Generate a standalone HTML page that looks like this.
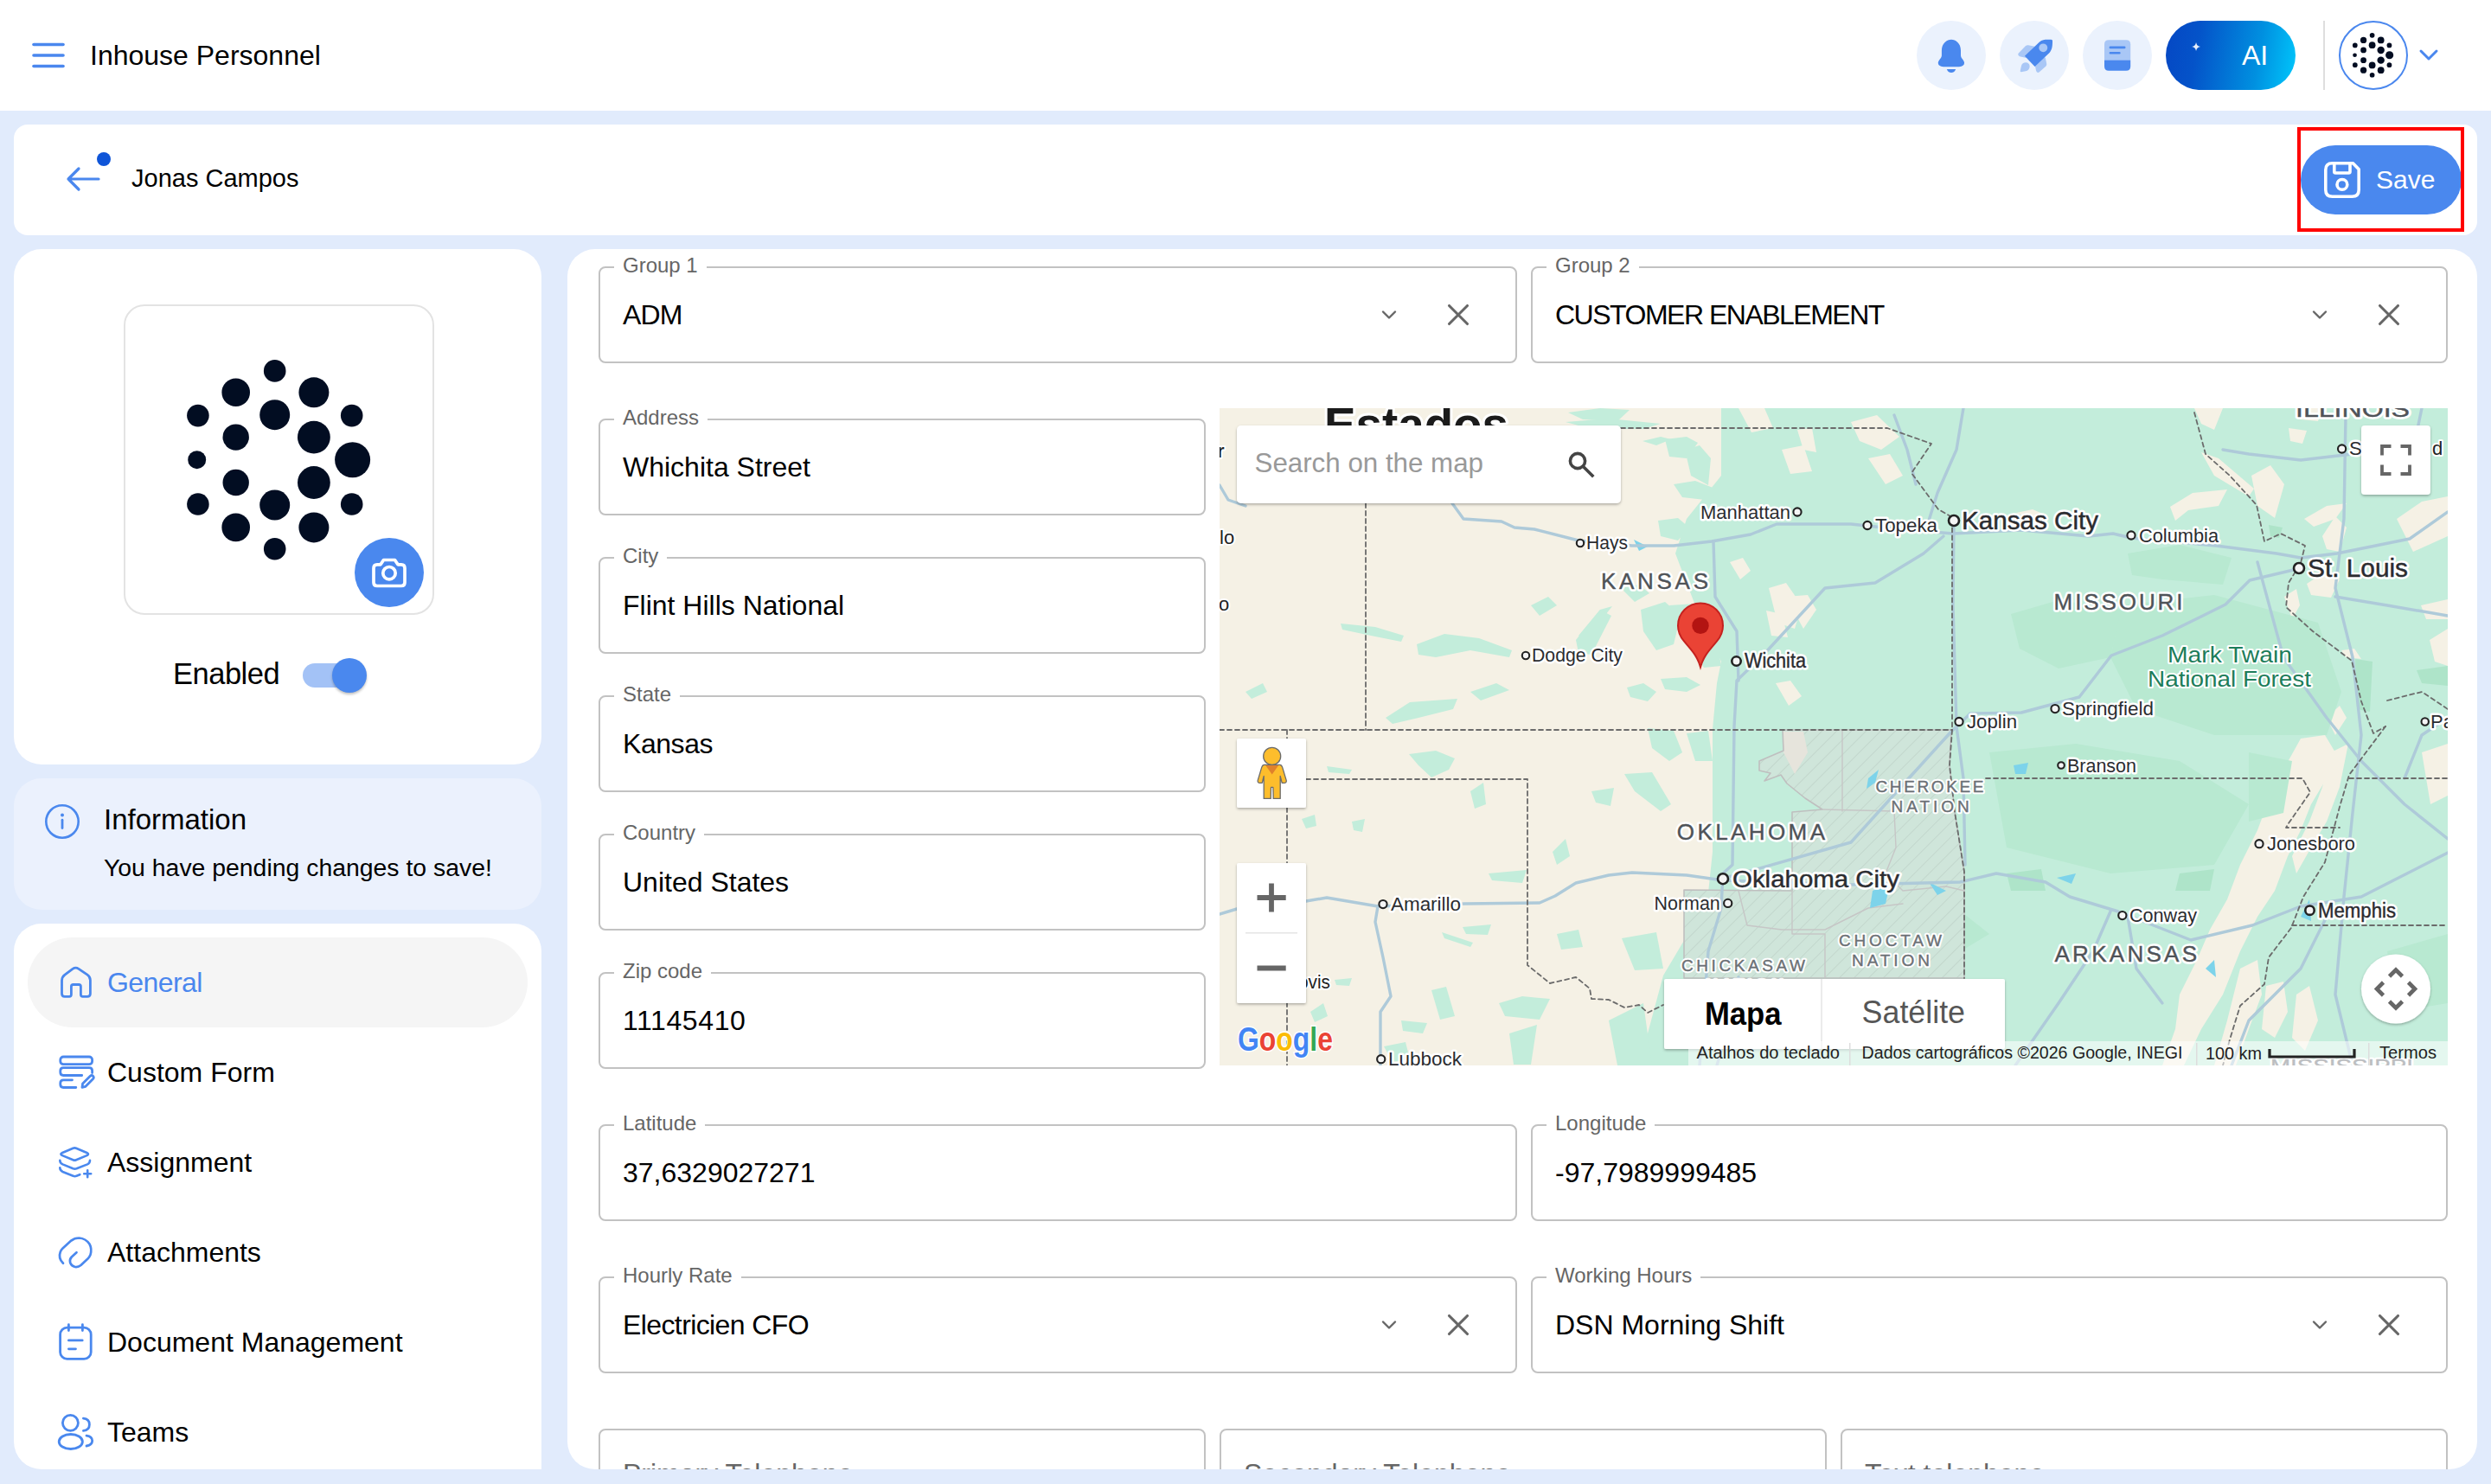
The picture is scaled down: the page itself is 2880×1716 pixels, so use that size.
<!DOCTYPE html>
<html><head><meta charset="utf-8">
<style>
*{box-sizing:border-box;margin:0;padding:0}
html,body{width:2880px;height:1716px;overflow:hidden}
body{background:#e1ebfc;font-family:"Liberation Sans",sans-serif;color:#000;position:relative}
.abs{position:absolute}
.hdr{left:0;top:0;width:2880px;height:128px;background:#fff}
.card{background:#fff;border-radius:32px}
.fld{position:absolute;border:2px solid #c2c2c2;border-radius:8px;height:112px}
.fld .lbl{position:absolute;top:-19px;left:16px;padding:0 10px;background:#fff;font-size:24px;color:#666;line-height:32px;white-space:nowrap}
.fld .val{position:absolute;left:26px;top:0;line-height:108px;font-size:32px;color:#000;white-space:nowrap}
.fld .chev{position:absolute;top:44px;width:22px;height:22px}
.fld .clr{position:absolute;top:40px;width:28px;height:28px}
.fld .ph{position:absolute;left:26px;top:30px;font-size:32px;line-height:40px;color:#666;white-space:nowrap}
.nav{position:absolute;left:68px;font-size:32px;white-space:nowrap}
.navt{position:absolute;left:124px;font-size:32px;white-space:nowrap;line-height:40px}
</style></head>
<body>
<svg width="0" height="0" style="position:absolute"><defs>
<g id="dots" fill="#020d22"><circle cx="-4.9" cy="-102.9" r="12.8"/><circle cx="-49.9" cy="-78.0" r="16.3"/><circle cx="40.3" cy="-78.0" r="17.5"/><circle cx="-93.7" cy="-51.2" r="12.8"/><circle cx="-4.9" cy="-52.1" r="17.5"/><circle cx="84.1" cy="-51.2" r="12.8"/><circle cx="-49.9" cy="-26.2" r="15.2"/><circle cx="40.3" cy="-26.2" r="18.9"/><circle cx="-94.9" cy="-0.1" r="10.5"/><circle cx="85.0" cy="-0.1" r="20.5"/><circle cx="-49.9" cy="26.2" r="15.2"/><circle cx="40.3" cy="26.2" r="18.9"/><circle cx="-93.7" cy="51.2" r="12.8"/><circle cx="-4.9" cy="52.2" r="17.5"/><circle cx="84.1" cy="51.2" r="12.8"/><circle cx="-49.9" cy="78.1" r="16.3"/><circle cx="40.3" cy="78.1" r="17.5"/><circle cx="-4.9" cy="103.0" r="12.8"/></g>
<g id="chev"><path d="M-7 -3.5 L0 3.5 L7 -3.5" fill="none" stroke="#666" stroke-width="2.4" stroke-linecap="round" stroke-linejoin="round"/></g>
<g id="xx"><path d="M-10.5 -10.5 L10.5 10.5 M10.5 -10.5 L-10.5 10.5" fill="none" stroke="#666" stroke-width="3.1" stroke-linecap="round"/></g>
</defs></svg>
<!-- header -->
<div class="abs hdr"></div>
<svg class="abs" style="left:36px;top:46px" width="40" height="34" viewBox="0 0 40 34">
 <g stroke="#4a87ee" stroke-width="3.6" stroke-linecap="round"><line x1="3" y1="5.5" x2="37" y2="5.5"/><line x1="3" y1="18" x2="37" y2="18"/><line x1="3" y1="30.5" x2="37" y2="30.5"/></g>
</svg>
<div class="abs" style="left:104px;top:44px;font-size:32px;line-height:40px;white-space:nowrap">Inhouse Personnel</div>

<!-- header right icons -->
<div class="abs" style="left:2216px;top:24px;width:80px;height:80px;border-radius:50%;background:#ebf2fd"></div>
<div class="abs" style="left:2312px;top:24px;width:80px;height:80px;border-radius:50%;background:#ebf2fd"></div>
<div class="abs" style="left:2408px;top:24px;width:80px;height:80px;border-radius:50%;background:#ebf2fd"></div>
<div class="abs" style="left:2504px;top:24px;width:150px;height:80px;border-radius:40px;background:linear-gradient(100deg,#0547c4 0%,#0453c9 25%,#0090e0 70%,#00c8fc 100%)"></div>
<div class="abs" style="left:2592px;top:44px;font-size:32px;line-height:40px;color:#fff">AI</div>
<div class="abs" style="left:2686px;top:24px;width:2px;height:80px;background:#dedede"></div>
<div class="abs" style="left:2704px;top:24px;width:80px;height:80px;border-radius:50%;border:2px solid #4a87ee;background:#fff"></div>
<svg class="abs" style="left:2216px;top:24px" width="80" height="80" viewBox="0 0 80 80">
 <path d="M40 21.8 C35 21.8 29 26 28.9 34.4 L28.9 40.2 C28.9 43 24.8 46 24.8 48.6 C24.8 51.5 27 53 31 53.2 L49 53.2 C53 53 55.1 51.5 55.1 48.6 C55.1 46 51 43 51 40.2 L51 34.4 C51 26 45 21.8 40 21.8 Z" fill="#4a88ee"/>
 <path d="M34.8 56 L45.2 56 C44 59 42 60 40 60 C38 60 36 59 34.8 56 Z" fill="#4a88ee"/>
</svg>
<svg class="abs" style="left:2312px;top:24px" width="80" height="80" viewBox="0 0 80 80">
 <path d="M22 37.3 L30 29 C31 28.2 32 28 33 28.2 L40.5 29.8 L31 43 L24 41.5 C21.5 41 20.5 38.8 22 37.3 Z" fill="#a9c7f6"/>
 <path d="M41.2 42.6 L52.8 42.6 L54.2 49.8 C54.4 51 54 52 53.2 52.8 L45.5 59.5 C44 60.5 42.5 59.5 42 57.5 L40 48 Z" fill="#a9c7f6"/>
 <path d="M24.8 59.2 C23.8 59.2 23.6 58.5 23.8 57.5 L25 52 C25.5 49.5 28 48 30.5 48.2 C33.5 48.5 35 51 34.6 53.5 C34.2 56 32.5 57.8 30 58.3 Z" fill="#a9c7f6"/>
 <path d="M28.9 40.8 L46 24.5 C50 21 55 21.8 59.5 21.8 C60.5 21.9 61 22.5 61 23.5 C61 28 61 33 57.5 37 L40.6 53 Z" fill="#4a88ee"/>
 <circle cx="50.3" cy="31.3" r="4.9" fill="#a9c7f6"/>
</svg>
<svg class="abs" style="left:2408px;top:24px" width="80" height="80" viewBox="0 0 80 80">
 <path d="M30 22.2 H50.2 Q55.2 22.2 55.2 27.2 V45.5 H25 V27.2 Q25 22.2 30 22.2 Z" fill="#a9c7f6"/>
 <path d="M25 45.5 H55.2 V52.7 Q55.2 57.7 50.2 57.7 H30 Q25 57.7 25 52.7 Z" fill="#4a88ee"/>
 <path d="M31.9 30.9 H48.2 M31.9 37.3 H42.4" stroke="#4a88ee" stroke-width="2.6" stroke-linecap="round"/>
</svg>
<svg class="abs" style="left:2530px;top:45px" width="18" height="18" viewBox="0 0 18 18"><path d="M9 4 Q9.6 8.4 14 9 Q9.6 9.6 9 14 Q8.4 9.6 4 9 Q8.4 8.4 9 4Z" fill="#fff" opacity=".9"/></svg>
<svg class="abs" style="left:2704px;top:24px" width="80" height="80" viewBox="0 0 80 80"><g transform="translate(39.7 39.8) scale(0.223)"><use href="#dots"/></g></svg>
<svg class="abs" style="left:2796px;top:56px" width="24" height="16" viewBox="0 0 24 16"><path d="M3 3 L12 12 L21 3" fill="none" stroke="#4a87ee" stroke-width="3" stroke-linecap="round" stroke-linejoin="round"/></svg>

<!-- title card -->
<div class="abs card" style="left:16px;top:144px;width:2848px;height:128px;border-radius:16px"></div>
<svg class="abs" style="left:74px;top:190px" width="46" height="36" viewBox="0 0 46 36">
 <path d="M40 17 H5 M17 5 L5 17 L17 29" fill="none" stroke="#4a87ee" stroke-width="3.2" stroke-linecap="round" stroke-linejoin="round"/>
</svg>
<div class="abs" style="left:112px;top:176px;width:16px;height:16px;border-radius:50%;background:#0f55d8"></div>
<div class="abs" style="left:152px;top:188px;font-size:29px;line-height:36px;white-space:nowrap">Jonas Campos</div>
<div class="abs" style="left:2660px;top:168px;width:186px;height:80px;border-radius:40px;background:#4a88ee"></div>
<svg class="abs" style="left:2680px;top:180px" width="56" height="56" viewBox="0 0 56 56">
 <path d="M16.5 8.8 H40.4 L47.2 15.8 V39.5 Q47.2 47.2 39.5 47.2 H16.5 Q8.8 47.2 8.8 39.5 V16.5 Q8.8 8.8 16.5 8.8 Z" fill="none" stroke="#fff" stroke-width="3.6" stroke-linejoin="round"/>
 <path d="M18.8 9 V18.5 Q18.8 20 20.3 20 H35.5 Q37 20 37 18.5 V9" fill="none" stroke="#fff" stroke-width="3.6"/>
 <circle cx="27.9" cy="33.4" r="5.9" fill="none" stroke="#fff" stroke-width="3.6"/>
</svg>
<div class="abs" style="left:2747px;top:188px;font-size:30px;line-height:40px;color:#fff">Save</div>
<div class="abs" style="left:2656px;top:147px;width:193px;height:121px;border:4px solid #ff0000"></div>

<!-- avatar card -->
<div class="abs card" style="left:16px;top:288px;width:610px;height:596px"></div>
<div class="abs" style="left:143px;top:352px;width:359px;height:359px;border:2px solid #e3e3e3;border-radius:24px"></div>
<svg class="abs" style="left:143px;top:352px" width="359" height="359" viewBox="143 352 359 359"><g transform="translate(322.6 531.8)"><use href="#dots"/></g></svg>
<div class="abs" style="left:410px;top:622px;width:80px;height:80px;border-radius:50%;background:#4a88ee"></div>
<svg class="abs" style="left:400px;top:612px" width="100" height="100" viewBox="0 0 100 100">
 <path d="M36 40.8 H40 L43.5 35.5 H56.5 L60 40.8 H64 Q68 40.8 68 45 V61.5 Q68 65.5 64 65.5 H36 Q32 65.5 32 61.5 V45 Q32 40.8 36 40.8 Z" fill="none" stroke="#fff" stroke-width="3.7" stroke-linejoin="round"/>
 <circle cx="50" cy="50.7" r="7.2" fill="none" stroke="#fff" stroke-width="3.7"/>
</svg>
<div class="abs" style="left:200px;top:759px;font-size:34.5px;line-height:40px;letter-spacing:-0.5px">Enabled</div>
<div class="abs" style="left:350px;top:767px;width:70px;height:28px;border-radius:14px;background:#a3c2f6"></div>
<div class="abs" style="left:384px;top:761px;width:40px;height:40px;border-radius:50%;background:#4a88ee;box-shadow:0 2px 3px rgba(0,0,0,.25)"></div>

<!-- info box -->
<div class="abs" style="left:16px;top:900px;width:610px;height:152px;border-radius:32px;background:#ebf1fd"></div>
<svg class="abs" style="left:40px;top:920px" width="60" height="60" viewBox="0 0 60 60">
 <circle cx="32" cy="30" r="18.7" fill="none" stroke="#4a88ee" stroke-width="2.6"/>
 <circle cx="32" cy="22.6" r="2" fill="#4a88ee"/>
 <path d="M32 28.2 V37.6" stroke="#4a88ee" stroke-width="2.8" stroke-linecap="round"/>
</svg>
<div class="abs" style="left:120px;top:930px;font-size:33px;line-height:36px">Information</div>
<div class="abs" style="left:120px;top:986px;font-size:28.4px;line-height:34px;white-space:nowrap">You have pending changes to save!</div>

<!-- nav card -->
<div class="abs" style="left:16px;top:1068px;width:610px;height:631px;border-radius:32px 32px 0 32px;background:#fff"></div>
<div class="abs" style="left:32px;top:1084px;width:578px;height:104px;border-radius:52px;background:#f5f5f5"></div>
<svg class="abs" style="left:60px;top:1110px" width="60" height="60" viewBox="0 0 60 60" fill="none" stroke="#4a88ee" stroke-width="2.8" stroke-linejoin="round" stroke-linecap="round">
 <path d="M22.4 40 V30.8 Q22.4 28.5 24.7 28.5 H31.1 Q33.4 28.5 33.4 30.8 V40 Q33.4 42.3 35.7 42.3 H41 Q44.4 42.3 44.4 39 V23.5 Q44.4 19.5 41 17.2 L31 10.3 Q27.5 8 24 10.3 L15 17.2 Q11.5 19.8 11.5 23.8 V39 Q11.5 42.3 14.8 42.3 H20.1 Q22.4 42.3 22.4 40 Z"/>
</svg>
<svg class="abs" style="left:60px;top:1200px" width="60" height="64" viewBox="0 0 60 64" fill="none" stroke="#4a88ee" stroke-width="2.8" stroke-linejoin="round" stroke-linecap="round">
 <rect x="9.8" y="22" width="36.8" height="8.7" rx="3.5"/>
 <path d="M34.7 43.5 H13.3 Q9.8 43.5 9.8 40 V38 Q9.8 34.6 13.3 34.6 H43.1 Q46.6 34.6 46.6 38 V40.5"/>
 <path d="M27.8 57.5 H13.3 Q9.8 57.5 9.8 54 V52.3 Q9.8 48.8 13.3 48.8 H23.5"/>
 <path d="M35 57.3 L35.6 53 L44.3 44.3 Q46 42.8 47.6 44.3 Q49 46 47.6 47.5 L39 56.3 Z"/>
</svg>
<svg class="abs" style="left:60px;top:1320px" width="60" height="60" viewBox="0 0 60 60" fill="none" stroke="#4a88ee" stroke-width="2.6" stroke-linejoin="round" stroke-linecap="round">
 <path d="M24.5 7.8 Q26.3 7 28.1 7.8 L41 13.3 Q43 14.6 41 15.9 L28.1 21.2 Q26.3 22 24.5 21.2 L11.5 15.9 Q9.3 14.6 11.5 13.3 Z"/>
 <path d="M9.3 21.8 Q9.3 25 12.5 26.4 L24.5 31.3 Q26.5 32 28.5 31.3 L41 26.4 Q44 25 44 21.8"/>
 <path d="M9.3 30.3 Q9.3 33.6 12.5 35 L24.5 39.8 Q26.5 40.6 28.5 39.8 L32.3 38.2"/>
 <path d="M41.2 33.2 V41.2 M37.2 37.2 H45.2"/>
</svg>
<svg class="abs" style="left:60px;top:1420px" width="60" height="60" viewBox="0 0 60 60" fill="none" stroke="#4a88ee" stroke-width="2.7" stroke-linejoin="round" stroke-linecap="round">
 <path d="M13 40.8 Q7 35 9.8 27.5 Q10.8 25.2 12.5 23.6 L22.3 14.6 Q26 11.5 31.5 11.5 Q39 12 43.5 18.5 Q46.5 24 44.5 31 Q43.5 33.5 41.5 35.5 L33.5 43 Q30.5 45.5 26.8 45 Q22.8 44.3 21.2 40.3 Q20 36.5 22.8 33.5 L28.5 28.2"/>
</svg>
<svg class="abs" style="left:60px;top:1525px" width="60" height="60" viewBox="0 0 60 60" fill="none" stroke="#4a88ee" stroke-width="2.8" stroke-linejoin="round" stroke-linecap="round">
 <rect x="9.6" y="10.2" width="35.6" height="36.2" rx="8"/>
 <path d="M19.4 6.7 V13.5 M35.4 6.7 V13.5 M19.4 24.9 H35.2 M19.4 34.8 H27.5"/>
</svg>
<svg class="abs" style="left:60px;top:1630px" width="60" height="60" viewBox="0 0 60 60" fill="none" stroke="#4a88ee" stroke-width="2.8" stroke-linejoin="round" stroke-linecap="round">
 <circle cx="21.4" cy="15.3" r="9"/>
 <ellipse cx="21.8" cy="37" rx="13.6" ry="8.5"/>
 <path d="M36.4 10.1 Q43.3 10.6 43.4 17.2 Q43.3 23.8 36.4 24.3"/>
 <path d="M40 30.1 Q46.5 31 46.7 36 Q46.5 41 40 42"/>
</svg>
<div class="navt" style="top:1116px;color:#4a87ee;letter-spacing:-0.6px">General</div>
<div class="navt" style="top:1220px">Custom Form</div>
<div class="navt" style="top:1324px">Assignment</div>
<div class="navt" style="top:1428px">Attachments</div>
<div class="navt" style="top:1532px">Document Management</div>
<div class="navt" style="top:1636px">Teams</div>

<!-- main card -->
<div class="abs card" style="left:656px;top:288px;width:2208px;height:1411px"></div>

<div class="fld" style="left:692px;top:308px;width:1062px"><span class="lbl">Group 1</span><svg style="position:absolute;left:897px;top:39px" width="30" height="30" viewBox="-15 -15 30 30"><use href="#chev"/></svg><svg style="position:absolute;left:977px;top:39px" width="30" height="30" viewBox="-15 -15 30 30"><use href="#xx"/></svg><span class="val" style="letter-spacing:-0.9px">ADM</span></div>
<div class="fld" style="left:1770px;top:308px;width:1060px"><span class="lbl">Group 2</span><svg style="position:absolute;left:895px;top:39px" width="30" height="30" viewBox="-15 -15 30 30"><use href="#chev"/></svg><svg style="position:absolute;left:975px;top:39px" width="30" height="30" viewBox="-15 -15 30 30"><use href="#xx"/></svg><span class="val" style="letter-spacing:-1.5px">CUSTOMER ENABLEMENT</span></div>
<div class="fld" style="left:692px;top:484px;width:702px"><span class="lbl">Address</span><span class="val">Whichita Street</span></div>
<div class="fld" style="left:692px;top:644px;width:702px"><span class="lbl">City</span><span class="val">Flint Hills National</span></div>
<div class="fld" style="left:692px;top:804px;width:702px"><span class="lbl">State</span><span class="val" style="letter-spacing:-0.45px">Kansas</span></div>
<div class="fld" style="left:692px;top:964px;width:702px"><span class="lbl">Country</span><span class="val">United States</span></div>
<div class="fld" style="left:692px;top:1124px;width:702px"><span class="lbl">Zip code</span><span class="val" style="letter-spacing:0.6px">11145410</span></div>
<div class="fld" style="left:692px;top:1300px;width:1062px"><span class="lbl">Latitude</span><span class="val">37,6329027271</span></div>
<div class="fld" style="left:1770px;top:1300px;width:1060px"><span class="lbl">Longitude</span><span class="val">-97,7989999485</span></div>
<div class="fld" style="left:692px;top:1476px;width:1062px"><span class="lbl">Hourly Rate</span><svg style="position:absolute;left:897px;top:39px" width="30" height="30" viewBox="-15 -15 30 30"><use href="#chev"/></svg><svg style="position:absolute;left:977px;top:39px" width="30" height="30" viewBox="-15 -15 30 30"><use href="#xx"/></svg><span class="val" style="letter-spacing:-0.6px">Electricien CFO</span></div>
<div class="fld" style="left:1770px;top:1476px;width:1060px"><span class="lbl">Working Hours</span><svg style="position:absolute;left:895px;top:39px" width="30" height="30" viewBox="-15 -15 30 30"><use href="#chev"/></svg><svg style="position:absolute;left:975px;top:39px" width="30" height="30" viewBox="-15 -15 30 30"><use href="#xx"/></svg><span class="val">DSN Morning Shift</span></div>

<!-- map -->
<svg class="abs" style="left:1410px;top:472px;overflow:hidden" width="1420" height="760" viewBox="0 0 1420 760" font-family="Liberation Sans, sans-serif">
<rect x="0" y="0" width="1420" height="760" fill="#f5f1e5"/>
<polygon points="580.0,0.0 1420.0,0.0 1420.0,760.0 485.0,760.0 513.0,656.0 564.0,570.0 570.0,513.0 570.0,371.0 575.0,318.0 580.0,293.0 550.0,228.0 527.0,168.0 540.0,128.0 580.0,78.0" fill="#c3eddb" />
<polygon points="403.0,5.0 440.0,0.0 474.0,2.0 460.0,15.0 420.0,13.0" fill="#c3eddb" />
<polygon points="489.0,38.0 510.0,33.0 522.0,36.0 505.0,43.0" fill="#c3eddb" />
<polygon points="515.0,36.0 540.0,33.0 553.0,40.0 540.0,58.0 520.0,56.0" fill="#c3eddb" />
<polygon points="538.0,48.0 555.0,43.0 568.0,58.0 565.0,89.0 545.0,78.0" fill="#c3eddb" />
<polygon points="525.0,88.0 550.0,84.0 573.0,93.0 570.0,107.0 535.0,103.0" fill="#c3eddb" />
<polygon points="507.0,130.0 530.0,127.0 543.0,138.0 530.0,153.0 510.0,148.0" fill="#c3eddb" />
<polygon points="464.0,208.0 485.0,204.0 497.0,214.0 480.0,224.0" fill="#c3eddb" />
<polygon points="415.0,263.0 440.0,233.0 454.0,229.0 435.0,253.0 420.0,267.0" fill="#c3eddb" />
<polygon points="487.0,233.0 515.0,224.0 533.0,240.0 525.0,273.0 505.0,280.0 490.0,258.0" fill="#c3eddb" />
<polygon points="520.0,228.0 550.0,226.0 565.0,243.0 548.0,263.0 530.0,256.0" fill="#c3eddb" />
<polygon points="471.0,323.0 490.0,318.0 505.0,328.0 495.0,339.0 475.0,334.0" fill="#c3eddb" />
<polygon points="510.0,313.0 540.0,311.0 556.0,320.0 540.0,328.0 515.0,325.0" fill="#c3eddb" />
<polygon points="545.0,273.0 575.0,268.0 580.0,298.0 560.0,300.0" fill="#c3eddb" />
<polygon points="400.0,16.0 450.0,12.0 510.0,18.0 490.0,24.0 430.0,24.0" fill="#c3eddb" />
<polygon points="140.0,249.0 180.0,253.0 213.0,263.0 210.0,270.0 175.0,263.0 142.0,256.0" fill="#c3eddb" />
<polygon points="228.0,273.0 260.0,261.0 300.0,266.0 338.0,280.0 335.0,288.0 290.0,280.0 250.0,288.0 230.0,285.0" fill="#c3eddb" />
<polygon points="412.0,268.0 440.0,233.0 453.0,240.0 430.0,285.0 415.0,283.0" fill="#c3eddb" />
<polygon points="192.0,358.0 220.0,340.0 275.0,336.0 270.0,348.0 230.0,358.0 200.0,365.0" fill="#c3eddb" />
<polygon points="290.0,328.0 320.0,318.0 335.0,326.0 302.0,338.0" fill="#c3eddb" />
<polygon points="30.0,328.0 50.0,318.0 55.0,328.0 37.0,336.0" fill="#c3eddb" />
<polygon points="360.0,228.0 380.0,218.0 390.0,228.0 370.0,240.0" fill="#c3eddb" />
<polygon points="124.0,414.0 153.0,418.0 150.0,423.0 126.0,421.0" fill="#c3eddb" />
<polygon points="219.0,400.0 250.0,396.0 272.0,405.0 265.0,418.0 245.0,427.0 230.0,413.0" fill="#c3eddb" />
<polygon points="468.0,423.0 500.0,421.0 522.0,458.0 510.0,466.0 480.0,443.0" fill="#c3eddb" />
<polygon points="430.0,443.0 456.0,439.0 452.0,460.0 435.0,456.0" fill="#c3eddb" />
<polygon points="495.0,370.0 525.0,373.0 535.0,398.0 520.0,408.0 500.0,393.0" fill="#c3eddb" />
<polygon points="540.0,376.0 565.0,373.0 570.0,408.0 550.0,408.0" fill="#c3eddb" />
<polygon points="311.0,538.0 355.0,534.0 350.0,549.0 315.0,546.0" fill="#c3eddb" />
<polygon points="281.0,600.0 314.0,597.0 310.0,609.0 285.0,608.0" fill="#c3eddb" />
<polygon points="257.0,606.0 293.0,618.0 290.0,623.0 260.0,613.0" fill="#c3eddb" />
<polygon points="245.0,673.0 262.0,669.0 272.0,703.0 255.0,707.0" fill="#c3eddb" />
<polygon points="323.0,688.0 350.0,680.0 382.0,683.0 370.0,707.0 330.0,703.0" fill="#c3eddb" />
<polygon points="335.0,723.0 367.0,713.0 360.0,759.0 340.0,759.0" fill="#c3eddb" />
<polygon points="465.0,613.0 505.0,606.0 513.0,648.0 480.0,650.0" fill="#c3eddb" />
<polygon points="450.0,708.0 490.0,688.0 500.0,760.0 460.0,760.0" fill="#c3eddb" />
<polygon points="153.0,478.0 168.0,475.0 165.0,490.0 155.0,488.0" fill="#c3eddb" />
<polygon points="133.0,661.0 153.0,659.0 150.0,668.0 135.0,667.0" fill="#c3eddb" />
<polygon points="290.0,443.0 305.0,433.0 308.0,458.0 295.0,463.0" fill="#c3eddb" />
<polygon points="385.0,513.0 400.0,498.0 405.0,518.0 390.0,528.0" fill="#c3eddb" />
<polygon points="390.0,608.0 415.0,603.0 420.0,623.0 395.0,626.0" fill="#c3eddb" />
<polygon points="210.0,708.0 240.0,711.0 235.0,723.0 212.0,720.0" fill="#c3eddb" />
<polygon points="190.0,738.0 215.0,733.0 220.0,753.0 200.0,756.0" fill="#c3eddb" />
<polygon points="105.0,698.0 120.0,688.0 125.0,703.0 110.0,710.0" fill="#c3eddb" />
<polygon points="60.0,598.0 70.0,588.0 80.0,603.0 68.0,610.0" fill="#c3eddb" />
<polygon points="95.0,475.0 110.0,470.0 112.0,483.0 100.0,486.0" fill="#c3eddb" />
<polygon points="590.0,178.0 605.0,173.0 614.0,188.0 602.0,198.0" fill="#f5f1e5" />
<polygon points="635.0,208.0 655.0,202.0 673.0,228.0 665.0,255.0 645.0,248.0" fill="#f5f1e5" />
<polygon points="632.0,234.0 650.0,238.0 657.0,265.0 638.0,263.0" fill="#f5f1e5" />
<polygon points="655.0,218.0 680.0,216.0 690.0,233.0 675.0,255.0" fill="#f5f1e5" />
<polygon points="643.0,318.0 660.0,315.0 673.0,333.0 658.0,344.0" fill="#f5f1e5" />
<polygon points="668.0,25.0 685.0,23.0 690.0,51.0 675.0,48.0" fill="#f5f1e5" />
<polygon points="600.0,0.0 630.0,0.0 640.0,23.0 615.0,28.0" fill="#f5f1e5" />
<polygon points="650.0,48.0 675.0,43.0 685.0,73.0 660.0,76.0" fill="#f5f1e5" />
<polygon points="730.0,16.0 760.0,8.0 786.0,33.0 765.0,48.0 740.0,38.0" fill="#f5f1e5" />
<polygon points="750.0,58.0 775.0,53.0 790.0,78.0 770.0,88.0" fill="#f5f1e5" />
<polygon points="921.0,121.0 940.0,117.0 954.0,123.0 935.0,127.0" fill="#f5f1e5" />
<polygon points="1127.0,0.0 1160.0,0.0 1150.0,25.0 1135.0,18.0" fill="#f5f1e5" />
<polygon points="1135.0,51.0 1155.0,58.0 1196.0,93.0 1190.0,102.0 1150.0,78.0" fill="#f5f1e5" />
<polygon points="1099.0,114.0 1125.0,98.0 1165.0,94.0 1155.0,113.0 1120.0,118.0 1105.0,130.0" fill="#f5f1e5" />
<polygon points="1193.0,78.0 1215.0,66.0 1231.0,88.0 1220.0,127.0 1200.0,113.0" fill="#f5f1e5" />
<polygon points="1236.0,23.0 1257.0,26.0 1252.0,41.0 1238.0,38.0" fill="#f5f1e5" />
<polygon points="1254.0,128.0 1280.0,113.0 1303.0,110.0 1290.0,128.0 1265.0,137.0" fill="#f5f1e5" />
<polygon points="1275.0,148.0 1290.0,125.0 1303.0,138.0 1295.0,166.0 1280.0,163.0" fill="#f5f1e5" />
<polygon points="1257.0,203.0 1280.0,188.0 1295.0,198.0 1285.0,219.0 1262.0,216.0" fill="#f5f1e5" />
<polygon points="1231.0,218.0 1245.0,209.0 1249.0,228.0 1240.0,244.0" fill="#f5f1e5" />
<polygon points="1361.0,128.0 1390.0,108.0 1420.0,102.0 1420.0,148.0 1380.0,166.0" fill="#f5f1e5" />
<polygon points="1389.0,228.0 1420.0,221.0 1420.0,244.0 1395.0,244.0" fill="#f5f1e5" />
<polygon points="1399.0,268.0 1420.0,255.0 1420.0,298.0 1405.0,293.0" fill="#f5f1e5" />
<polygon points="1297.0,280.0 1312.0,278.0 1320.0,290.0 1302.0,288.0" fill="#f5f1e5" />
<polygon points="1280.0,358.0 1295.0,344.0 1303.0,358.0 1290.0,378.0" fill="#f5f1e5" />
<polygon points="1244.0,0.0 1275.0,0.0 1270.0,15.0 1250.0,13.0" fill="#f5f1e5" />
<polygon points="1250.0,382.0 1278.0,378.0 1290.0,398.0 1280.0,428.0 1262.0,458.0 1250.0,488.0 1235.0,518.0 1220.0,558.0 1200.0,588.0 1180.0,628.0 1160.0,678.0 1135.0,718.0 1115.0,760.0 1090.0,760.0 1105.0,718.0 1110.0,678.0 1130.0,638.0 1145.0,603.0 1165.0,568.0 1180.0,528.0 1200.0,488.0 1215.0,448.0 1230.0,418.0" fill="#f5f1e5" />
<polygon points="1285.0,398.0 1305.0,388.0 1295.0,438.0 1280.0,478.0 1262.0,508.0 1245.0,538.0 1240.0,518.0 1260.0,478.0 1275.0,438.0" fill="#f5f1e5" />
<polygon points="1180.0,648.0 1200.0,638.0 1205.0,678.0 1190.0,718.0 1175.0,760.0 1150.0,760.0 1165.0,708.0" fill="#f5f1e5" />
<polygon points="1210.0,668.0 1230.0,663.0 1235.0,698.0 1220.0,728.0 1205.0,718.0" fill="#f5f1e5" />
<polygon points="1245.0,678.0 1260.0,668.0 1270.0,708.0 1255.0,743.0 1240.0,728.0" fill="#f5f1e5" />
<polygon points="1390.0,398.0 1420.0,388.0 1420.0,448.0 1400.0,458.0" fill="#f5f1e5" />
<polygon points="1050.0,168.0 1110.0,158.0 1170.0,173.0 1160.0,204.0 1090.0,198.0 1055.0,193.0" fill="#b8e9d1" />
<polygon points="915.0,238.0 970.0,222.0 1043.0,233.0 1030.0,288.0 970.0,301.0 925.0,278.0" fill="#b8e9d1" />
<polygon points="1043.0,228.0 1150.0,216.0 1270.0,248.0 1297.0,328.0 1280.0,378.0 1150.0,378.0 1060.0,348.0 1030.0,288.0" fill="#b8e9d1" />
<polygon points="890.0,398.0 990.0,388.0 1110.0,408.0 1190.0,458.0 1150.0,528.0 1030.0,538.0 910.0,508.0" fill="#b8e9d1" />
<polygon points="770.0,578.0 840.0,568.0 890.0,608.0 840.0,638.0 780.0,628.0" fill="#b8e9d1" />
<polygon points="1190.0,398.0 1240.0,408.0 1230.0,468.0 1190.0,478.0" fill="#b8e9d1" />
<polygon points="1350.0,628.0 1420.0,608.0 1420.0,688.0 1360.0,698.0" fill="#b8e9d1" />
<polygon points="1313.0,290.0 1333.0,293.0 1330.0,351.0 1315.0,348.0" fill="#aee4c9" />
<polygon points="1384.0,303.0 1420.0,298.0 1420.0,321.0 1390.0,318.0" fill="#aee4c9" />
<polygon points="1213.0,135.0 1229.0,138.0 1225.0,150.0 1215.0,148.0" fill="#aee4c9" />
<polygon points="910.0,538.0 950.0,533.0 955.0,558.0 915.0,558.0" fill="#aee4c9" />
<polygon points="1110.0,538.0 1150.0,533.0 1145.0,558.0 1105.0,558.0" fill="#aee4c9" />
<defs><pattern id="hatch" width="12" height="12" patternUnits="userSpaceOnUse" patternTransform="rotate(45)"><rect width="12" height="12" fill="#cfe5da"/><line x1="0" y1="0" x2="0" y2="12" stroke="#c2d6cc" stroke-width="2"/></pattern></defs>
<polygon points="651.0,372.0 846.0,372.0 844.0,413.0 850.0,467.0 861.0,536.0 861.0,659.0 537.0,659.0 537.0,557.0 662.0,558.0 662.0,467.0 697.0,464.0 677.0,451.0 656.0,434.0 649.0,424.0 630.0,431.0 637.0,422.0 624.0,419.0 624.0,408.0 652.0,396.0" fill="url(#hatch)" />
<polygon points="651.0,374.0 675.0,374.0 680.0,398.0 665.0,423.0 652.0,398.0" fill="#e6e4dc" />
<polyline points="651.0,372.0 846.0,372.0 844.0,413.0 850.0,467.0 861.0,536.0 861.0,659.0 537.0,659.0 537.0,557.0 662.0,558.0 662.0,467.0 697.0,464.0 677.0,451.0 656.0,434.0 649.0,424.0 630.0,431.0 637.0,422.0 624.0,419.0 624.0,408.0 652.0,396.0 651.0,372.0" fill="none" stroke="#bfbfbf" stroke-width="1.6" stroke-linejoin="round" stroke-linecap="round" />
<polyline points="697.0,464.0 780.0,466.0 782.0,508.0 770.0,538.0 790.0,558.0 840.0,553.0 861.0,558.0" fill="none" stroke="#c6c6c6" stroke-width="1.4" stroke-linejoin="round" stroke-linecap="round" />
<polyline points="720.0,372.0 720.0,466.0" fill="none" stroke="#c6c6c6" stroke-width="1.4" stroke-linejoin="round" stroke-linecap="round" />
<polyline points="662.0,558.0 662.0,608.0 700.0,608.0 700.0,659.0" fill="none" stroke="#c6c6c6" stroke-width="1.4" stroke-linejoin="round" stroke-linecap="round" />
<polyline points="600.0,558.0 610.0,598.0 650.0,603.0 700.0,603.0 750.0,578.0 790.0,573.0" fill="none" stroke="#c6c6c6" stroke-width="1.4" stroke-linejoin="round" stroke-linecap="round" />
<polygon points="750.0,428.0 762.0,418.0 758.0,433.0 748.0,440.0" fill="#7dd3ea" />
<polygon points="755.0,558.0 775.0,550.0 770.0,573.0 752.0,578.0" fill="#7dd3ea" />
<polygon points="820.0,548.0 840.0,558.0 830.0,563.0" fill="#7dd3ea" />
<polygon points="918.0,413.0 935.0,410.0 932.0,423.0 920.0,423.0" fill="#7dd3ea" />
<polygon points="968.0,543.0 990.0,538.0 985.0,550.0" fill="#7dd3ea" />
<polygon points="479.0,152.0 495.0,160.0 485.0,165.0" fill="#7dd3ea" />
<polygon points="1250.0,588.0 1260.0,568.0 1262.0,593.0" fill="#7dd3ea" />
<polygon points="1140.0,648.0 1150.0,638.0 1152.0,658.0" fill="#7dd3ea" />
<polyline points="0.0,89.0 10.0,106.0 30.0,113.0" fill="none" stroke="#aecad9" stroke-width="3.4" stroke-linejoin="round" stroke-linecap="round" />
<polyline points="269.0,110.0 282.0,128.0 326.0,131.0 341.0,138.0 364.0,140.0 415.0,153.0 477.0,159.0 525.0,159.0 569.0,154.0 614.0,146.0 644.0,134.0 730.0,134.0 786.0,140.0 848.0,145.0 927.0,141.0 1005.0,148.0 1033.0,145.0 1054.0,150.0 1152.0,159.0 1222.0,168.0 1250.0,173.0 1292.0,168.0 1376.0,151.0 1420.0,120.0" fill="none" stroke="#aecad9" stroke-width="3.4" stroke-linejoin="round" stroke-linecap="round" />
<polyline points="837.0,148.0 814.0,168.0 786.0,185.0 758.0,202.0 700.0,208.0 664.0,247.0 629.0,285.0 598.0,315.0 595.0,368.0 593.0,528.0 582.0,538.0 580.0,578.0 565.0,628.0 555.0,760.0" fill="none" stroke="#aecad9" stroke-width="3.4" stroke-linejoin="round" stroke-linecap="round" />
<polyline points="571.0,154.0 573.0,218.0 598.0,258.0 600.0,315.0" fill="none" stroke="#aecad9" stroke-width="3.4" stroke-linejoin="round" stroke-linecap="round" />
<polyline points="0.0,585.0 20.0,579.0 100.0,570.0 124.0,566.0 183.0,576.0 284.0,573.0 370.0,572.0 388.0,564.0 412.0,549.0 450.0,540.0 477.0,537.0 540.0,540.0 582.0,546.0 730.0,551.0 856.0,548.0 898.0,538.0 955.0,548.0 983.0,565.0 1039.0,582.0 1123.0,615.0 1194.0,598.0 1250.0,576.0 1320.0,565.0 1420.0,514.0" fill="none" stroke="#aecad9" stroke-width="3.4" stroke-linejoin="round" stroke-linecap="round" />
<polyline points="183.0,576.0 180.0,594.0 189.0,635.0 198.0,680.0 186.0,698.0 186.0,760.0" fill="none" stroke="#aecad9" stroke-width="3.4" stroke-linejoin="round" stroke-linecap="round" />
<polyline points="582.0,544.0 730.0,502.0 844.0,376.0 868.0,353.0 927.0,352.0 994.0,334.0 1031.0,286.0 1090.0,263.0 1163.0,227.0 1191.0,199.0 1250.0,185.0" fill="none" stroke="#aecad9" stroke-width="3.4" stroke-linejoin="round" stroke-linecap="round" />
<polyline points="849.0,130.0 848.0,228.0 852.0,368.0 860.0,428.0 862.0,528.0" fill="none" stroke="#aecad9" stroke-width="3.4" stroke-linejoin="round" stroke-linecap="round" />
<polyline points="860.0,0.0 852.0,48.0 830.0,98.0 820.0,130.0" fill="none" stroke="#aecad9" stroke-width="3.4" stroke-linejoin="round" stroke-linecap="round" />
<polyline points="780.0,8.0 795.0,48.0 805.0,88.0" fill="none" stroke="#aecad9" stroke-width="3.4" stroke-linejoin="round" stroke-linecap="round" />
<polyline points="1160.0,48.0 1190.0,53.0 1250.0,60.0 1310.0,53.0" fill="none" stroke="#aecad9" stroke-width="3.4" stroke-linejoin="round" stroke-linecap="round" />
<polyline points="1302.0,8.0 1300.0,128.0 1290.0,208.0 1310.0,288.0 1320.0,378.0 1310.0,468.0 1300.0,565.0 1290.0,678.0 1310.0,760.0" fill="none" stroke="#aecad9" stroke-width="3.4" stroke-linejoin="round" stroke-linecap="round" />
<polyline points="1200.0,178.0 1230.0,288.0 1280.0,358.0 1320.0,408.0 1370.0,458.0 1420.0,498.0" fill="none" stroke="#aecad9" stroke-width="3.4" stroke-linejoin="round" stroke-linecap="round" />
<polyline points="600.0,658.0 590.0,708.0 575.0,760.0" fill="none" stroke="#aecad9" stroke-width="3.4" stroke-linejoin="round" stroke-linecap="round" />
<polyline points="1030.0,582.0 1010.0,628.0 970.0,688.0 920.0,760.0" fill="none" stroke="#aecad9" stroke-width="3.4" stroke-linejoin="round" stroke-linecap="round" />
<polyline points="1050.0,588.0 1060.0,648.0 1090.0,688.0" fill="none" stroke="#aecad9" stroke-width="3.4" stroke-linejoin="round" stroke-linecap="round" />
<polyline points="1170.0,760.0 1190.0,708.0 1250.0,648.0 1280.0,588.0" fill="none" stroke="#aecad9" stroke-width="3.4" stroke-linejoin="round" stroke-linecap="round" />
<polyline points="1370.0,428.0 1390.0,378.0 1420.0,358.0" fill="none" stroke="#aecad9" stroke-width="3.4" stroke-linejoin="round" stroke-linecap="round" />
<polyline points="1390.0,0.0 1380.0,48.0 1360.0,88.0" fill="none" stroke="#aecad9" stroke-width="3.4" stroke-linejoin="round" stroke-linecap="round" />
<polyline points="1290.0,218.0 1350.0,228.0 1420.0,240.0" fill="none" stroke="#aecad9" stroke-width="3.4" stroke-linejoin="round" stroke-linecap="round" />
<polyline points="464.0,23.0 772.0,23.0 823.0,41.0 800.0,75.0 831.0,117.0 847.0,126.0 847.0,372.0" fill="none" stroke="#6b6b6b" stroke-width="1.8" stroke-linejoin="round" stroke-linecap="round" stroke-dasharray="5 4"/>
<polyline points="169.0,110.0 169.0,372.0" fill="none" stroke="#6b6b6b" stroke-width="1.8" stroke-linejoin="round" stroke-linecap="round" stroke-dasharray="5 4"/>
<polyline points="0.0,372.0 847.0,372.0" fill="none" stroke="#6b6b6b" stroke-width="1.8" stroke-linejoin="round" stroke-linecap="round" stroke-dasharray="5 4"/>
<polyline points="78.0,462.0 78.0,760.0" fill="none" stroke="#6b6b6b" stroke-width="1.8" stroke-linejoin="round" stroke-linecap="round" stroke-dasharray="5 4"/>
<polyline points="78.0,372.0 78.0,382.0" fill="none" stroke="#6b6b6b" stroke-width="1.8" stroke-linejoin="round" stroke-linecap="round" stroke-dasharray="5 4"/>
<polyline points="100.0,429.0 356.0,429.0 356.0,644.0 382.0,665.0 412.0,658.0 428.0,671.0 430.0,683.0 450.0,684.0 468.0,693.0 485.0,690.0 495.0,699.0 513.0,690.0" fill="none" stroke="#6b6b6b" stroke-width="1.8" stroke-linejoin="round" stroke-linecap="round" stroke-dasharray="5 4"/>
<polyline points="847.0,372.0 844.0,413.0 850.0,467.0 861.0,536.0 861.0,659.0" fill="none" stroke="#6b6b6b" stroke-width="1.8" stroke-linejoin="round" stroke-linecap="round" stroke-dasharray="5 4"/>
<polyline points="886.0,428.0 1252.0,428.0 1261.0,444.0 1236.0,480.0 1233.0,485.0 1295.0,485.0" fill="none" stroke="#6b6b6b" stroke-width="1.8" stroke-linejoin="round" stroke-linecap="round" stroke-dasharray="5 4"/>
<polyline points="1348.0,368.0 1306.0,424.0 1295.0,461.0 1278.0,525.0 1253.0,565.0 1239.0,601.0 1213.0,635.0 1208.0,666.0 1180.0,691.0 1168.0,730.0 1160.0,760.0" fill="none" stroke="#6b6b6b" stroke-width="1.8" stroke-linejoin="round" stroke-linecap="round" stroke-dasharray="5 4"/>
<polyline points="1240.0,598.0 1420.0,598.0" fill="none" stroke="#6b6b6b" stroke-width="1.8" stroke-linejoin="round" stroke-linecap="round" stroke-dasharray="5 4"/>
<polyline points="1306.0,428.0 1420.0,428.0" fill="none" stroke="#6b6b6b" stroke-width="1.8" stroke-linejoin="round" stroke-linecap="round" stroke-dasharray="5 4"/>
<polyline points="1127.0,5.0 1140.0,53.0 1168.0,78.0 1199.0,112.0 1208.0,154.0 1227.0,145.0 1255.0,159.0 1250.0,179.0 1236.0,202.0 1233.0,230.0 1264.0,258.0 1309.0,292.0 1320.0,339.0 1334.0,376.0 1348.0,368.0" fill="none" stroke="#6b6b6b" stroke-width="1.8" stroke-linejoin="round" stroke-linecap="round" stroke-dasharray="5 4"/>
<polyline points="1350.0,338.0 1390.0,328.0 1420.0,348.0" fill="none" stroke="#6b6b6b" stroke-width="1.8" stroke-linejoin="round" stroke-linecap="round" stroke-dasharray="5 4"/>
<text x="121.0" y="38.0" font-size="55" font-weight="bold" fill="#1b1b1b" stroke="#fff" stroke-width="6" paint-order="stroke" stroke-linejoin="round" textLength="213.0" lengthAdjust="spacingAndGlyphs" >Estados</text>
<text x="1244.0" y="10.0" font-size="26" fill="#fff" stroke="#fff" stroke-width="5.416" stroke-linejoin="round" textLength="132.0" lengthAdjust="spacingAndGlyphs" >ILLINOIS</text>
<text x="1244.0" y="10.0" font-size="26" fill="#4f5358" stroke="#4f5358" stroke-width="0.42" stroke-linejoin="round" textLength="132.0" lengthAdjust="spacingAndGlyphs" >ILLINOIS</text>
<text x="-3.0" y="57.0" font-size="22" font-weight="bold" fill="#222" stroke="#fff" stroke-width="4" paint-order="stroke" stroke-linejoin="round" >r</text>
<text x="0.0" y="157.0" font-size="22" font-weight="normal" fill="#222" stroke="#fff" stroke-width="4" paint-order="stroke" stroke-linejoin="round" >lo</text>
<text x="-1.0" y="234.0" font-size="22" font-weight="normal" fill="#222" stroke="#fff" stroke-width="4" paint-order="stroke" stroke-linejoin="round" >o</text>
<text x="424.0" y="163.0" font-size="22" font-weight="normal" fill="#2b2c30" stroke="#fff" stroke-width="5" paint-order="stroke" stroke-linejoin="round" textLength="48.0" lengthAdjust="spacingAndGlyphs" >Hays</text>
<text x="556.0" y="128.0" font-size="22" font-weight="normal" fill="#2b2c30" stroke="#fff" stroke-width="5" paint-order="stroke" stroke-linejoin="round" textLength="104.0" lengthAdjust="spacingAndGlyphs" >Manhattan</text>
<text x="361.0" y="293.0" font-size="22" font-weight="normal" fill="#2b2c30" stroke="#fff" stroke-width="5" paint-order="stroke" stroke-linejoin="round" textLength="105.0" lengthAdjust="spacingAndGlyphs" >Dodge City</text>
<text x="607.0" y="300.0" font-size="23" fill="#fff" stroke="#fff" stroke-width="5.4" stroke-linejoin="round" textLength="71.0" lengthAdjust="spacingAndGlyphs" >Wichita</text>
<text x="607.0" y="300.0" font-size="23" fill="#2b2c30" stroke="#2b2c30" stroke-width="0.40" stroke-linejoin="round" textLength="71.0" lengthAdjust="spacingAndGlyphs" >Wichita</text>
<text x="858.0" y="140.0" font-size="29" fill="#fff" stroke="#fff" stroke-width="5.464" stroke-linejoin="round" textLength="158.0" lengthAdjust="spacingAndGlyphs" >Kansas City</text>
<text x="858.0" y="140.0" font-size="29" fill="#2b2c30" stroke="#2b2c30" stroke-width="0.46" stroke-linejoin="round" textLength="158.0" lengthAdjust="spacingAndGlyphs" >Kansas City</text>
<text x="758.0" y="143.0" font-size="22" font-weight="normal" fill="#2b2c30" stroke="#fff" stroke-width="5" paint-order="stroke" stroke-linejoin="round" textLength="72.0" lengthAdjust="spacingAndGlyphs" >Topeka</text>
<text x="1063.0" y="154.6" font-size="22" font-weight="normal" fill="#2b2c30" stroke="#fff" stroke-width="5" paint-order="stroke" stroke-linejoin="round" textLength="92.0" lengthAdjust="spacingAndGlyphs" >Columbia</text>
<text x="1258.0" y="195.0" font-size="29" fill="#fff" stroke="#fff" stroke-width="5.464" stroke-linejoin="round" textLength="116.0" lengthAdjust="spacingAndGlyphs" >St. Louis</text>
<text x="1258.0" y="195.0" font-size="29" fill="#2b2c30" stroke="#2b2c30" stroke-width="0.46" stroke-linejoin="round" textLength="116.0" lengthAdjust="spacingAndGlyphs" >St. Louis</text>
<text x="974.0" y="354.7" font-size="22" font-weight="normal" fill="#2b2c30" stroke="#fff" stroke-width="5" paint-order="stroke" stroke-linejoin="round" textLength="106.0" lengthAdjust="spacingAndGlyphs" >Springfield</text>
<text x="864.0" y="369.6" font-size="22" font-weight="normal" fill="#2b2c30" stroke="#fff" stroke-width="5" paint-order="stroke" stroke-linejoin="round" textLength="58.0" lengthAdjust="spacingAndGlyphs" >Joplin</text>
<text x="1306.0" y="54.0" font-size="22" font-weight="normal" fill="#2b2c30" stroke="#fff" stroke-width="5" paint-order="stroke" stroke-linejoin="round" >S</text>
<text x="1400.0" y="369.6" font-size="22" font-weight="normal" fill="#2b2c30" stroke="#fff" stroke-width="5" paint-order="stroke" stroke-linejoin="round" >Pa</text>
<text x="198.0" y="581.0" font-size="22" font-weight="normal" fill="#2b2c30" stroke="#fff" stroke-width="5" paint-order="stroke" stroke-linejoin="round" textLength="81.0" lengthAdjust="spacingAndGlyphs" >Amarillo</text>
<text x="195.0" y="760.0" font-size="22" font-weight="normal" fill="#2b2c30" stroke="#fff" stroke-width="5" paint-order="stroke" stroke-linejoin="round" textLength="85.0" lengthAdjust="spacingAndGlyphs" >Lubbock</text>
<text x="593.0" y="554.0" font-size="27" fill="#fff" stroke="#fff" stroke-width="5.432" stroke-linejoin="round" textLength="193.0" lengthAdjust="spacingAndGlyphs" >Oklahoma City</text>
<text x="593.0" y="554.0" font-size="27" fill="#2b2c30" stroke="#2b2c30" stroke-width="0.43" stroke-linejoin="round" textLength="193.0" lengthAdjust="spacingAndGlyphs" >Oklahoma City</text>
<text x="502.5" y="579.8" font-size="22" font-weight="normal" fill="#2b2c30" stroke="#fff" stroke-width="5" paint-order="stroke" stroke-linejoin="round" textLength="76.3" lengthAdjust="spacingAndGlyphs" >Norman</text>
<text x="980.0" y="420.5" font-size="22" font-weight="normal" fill="#2b2c30" stroke="#fff" stroke-width="5" paint-order="stroke" stroke-linejoin="round" textLength="80.0" lengthAdjust="spacingAndGlyphs" >Branson</text>
<text x="1211.0" y="511.0" font-size="22" font-weight="normal" fill="#2b2c30" stroke="#fff" stroke-width="5" paint-order="stroke" stroke-linejoin="round" textLength="102.0" lengthAdjust="spacingAndGlyphs" >Jonesboro</text>
<text x="1052.0" y="594.0" font-size="22" font-weight="normal" fill="#2b2c30" stroke="#fff" stroke-width="5" paint-order="stroke" stroke-linejoin="round" textLength="78.0" lengthAdjust="spacingAndGlyphs" >Conway</text>
<text x="1270.0" y="588.6" font-size="23" fill="#fff" stroke="#fff" stroke-width="5.4" stroke-linejoin="round" textLength="90.0" lengthAdjust="spacingAndGlyphs" >Memphis</text>
<text x="1270.0" y="588.6" font-size="23" fill="#2b2c30" stroke="#2b2c30" stroke-width="0.40" stroke-linejoin="round" textLength="90.0" lengthAdjust="spacingAndGlyphs" >Memphis</text>
<circle cx="417.0" cy="156.0" r="4.2" fill="#f5f5f5" stroke="#222" stroke-width="2.1"/>
<circle cx="668.0" cy="120.0" r="4.6" fill="#f5f5f5" stroke="#222" stroke-width="2.1"/>
<circle cx="354.0" cy="286.0" r="4.2" fill="#f5f5f5" stroke="#222" stroke-width="2.1"/>
<circle cx="597.5" cy="292.5" r="5.2" fill="#f5f5f5" stroke="#222" stroke-width="2.6"/>
<circle cx="849.0" cy="130.0" r="6" fill="#f5f5f5" stroke="#222" stroke-width="2.6"/>
<circle cx="749.0" cy="135.5" r="4.6" fill="#f5f5f5" stroke="#222" stroke-width="2.1"/>
<circle cx="1054.0" cy="147.0" r="4.6" fill="#f5f5f5" stroke="#222" stroke-width="2.1"/>
<circle cx="1248.0" cy="185.0" r="6" fill="#f5f5f5" stroke="#222" stroke-width="2.6"/>
<circle cx="966.0" cy="347.6" r="4.6" fill="#f5f5f5" stroke="#222" stroke-width="2.1"/>
<circle cx="855.0" cy="362.5" r="4.6" fill="#f5f5f5" stroke="#222" stroke-width="2.1"/>
<circle cx="1297.6" cy="47.0" r="4.6" fill="#f5f5f5" stroke="#222" stroke-width="2.1"/>
<circle cx="1393.7" cy="362.5" r="4.2" fill="#f5f5f5" stroke="#222" stroke-width="2.1"/>
<circle cx="189.0" cy="573.6" r="4.6" fill="#f5f5f5" stroke="#222" stroke-width="2.1"/>
<circle cx="186.7" cy="752.7" r="4.6" fill="#f5f5f5" stroke="#222" stroke-width="2.1"/>
<circle cx="582.0" cy="544.2" r="6" fill="#f5f5f5" stroke="#222" stroke-width="2.6"/>
<circle cx="587.7" cy="572.4" r="4.6" fill="#f5f5f5" stroke="#222" stroke-width="2.1"/>
<circle cx="973.0" cy="413.0" r="3.8" fill="#f5f5f5" stroke="#222" stroke-width="2.1"/>
<circle cx="1202.0" cy="503.7" r="4.6" fill="#f5f5f5" stroke="#222" stroke-width="2.1"/>
<circle cx="1043.8" cy="586.6" r="4.6" fill="#f5f5f5" stroke="#222" stroke-width="2.1"/>
<circle cx="1260.5" cy="580.7" r="5.2" fill="#f5f5f5" stroke="#222" stroke-width="2.6"/>
<text x="1402.0" y="54.0" font-size="22" font-weight="normal" fill="#222" stroke="#fff" stroke-width="4" paint-order="stroke" stroke-linejoin="round" >d</text>
<text x="91.0" y="671.0" font-size="22" font-weight="normal" fill="#222" stroke="#fff" stroke-width="4" paint-order="stroke" stroke-linejoin="round" textLength="37.0" lengthAdjust="spacingAndGlyphs" >ovis</text>
<text x="441.0" y="209.0" font-size="26" fill="#fff" stroke="#fff" stroke-width="5.416" stroke-linejoin="round" textLength="124.0" lengthAdjust="spacing" >KANSAS</text>
<text x="441.0" y="209.0" font-size="26" fill="#4f5358" stroke="#4f5358" stroke-width="0.42" stroke-linejoin="round" textLength="124.0" lengthAdjust="spacing" >KANSAS</text>
<text x="964.6" y="233.0" font-size="26" fill="#fff" stroke="#fff" stroke-width="5.416" stroke-linejoin="round" textLength="148.9" lengthAdjust="spacing" >MISSOURI</text>
<text x="964.6" y="233.0" font-size="26" fill="#4f5358" stroke="#4f5358" stroke-width="0.42" stroke-linejoin="round" textLength="148.9" lengthAdjust="spacing" >MISSOURI</text>
<text x="528.8" y="499.0" font-size="26" fill="#fff" stroke="#fff" stroke-width="5.416" stroke-linejoin="round" textLength="171.2" lengthAdjust="spacing" >OKLAHOMA</text>
<text x="528.8" y="499.0" font-size="26" fill="#4f5358" stroke="#4f5358" stroke-width="0.42" stroke-linejoin="round" textLength="171.2" lengthAdjust="spacing" >OKLAHOMA</text>
<text x="965.5" y="640.0" font-size="26" fill="#fff" stroke="#fff" stroke-width="5.416" stroke-linejoin="round" textLength="164.5" lengthAdjust="spacing" >ARKANSAS</text>
<text x="965.5" y="640.0" font-size="26" fill="#4f5358" stroke="#4f5358" stroke-width="0.42" stroke-linejoin="round" textLength="164.5" lengthAdjust="spacing" >ARKANSAS</text>
<text x="758.5" y="444.4" font-size="19" fill="#fff" stroke="#fff" stroke-width="4.4" stroke-linejoin="round" textLength="125.0" lengthAdjust="spacing" >CHEROKEE</text>
<text x="758.5" y="444.4" font-size="19" fill="#6b7075" stroke="#6b7075" stroke-width="0.40" stroke-linejoin="round" textLength="125.0" lengthAdjust="spacing" >CHEROKEE</text>
<text x="776.5" y="466.6" font-size="19" fill="#fff" stroke="#fff" stroke-width="4.4" stroke-linejoin="round" textLength="90.2" lengthAdjust="spacing" >NATION</text>
<text x="776.5" y="466.6" font-size="19" fill="#6b7075" stroke="#6b7075" stroke-width="0.40" stroke-linejoin="round" textLength="90.2" lengthAdjust="spacing" >NATION</text>
<text x="716.0" y="622.0" font-size="19" fill="#fff" stroke="#fff" stroke-width="4.4" stroke-linejoin="round" textLength="119.0" lengthAdjust="spacing" >CHOCTAW</text>
<text x="716.0" y="622.0" font-size="19" fill="#6b7075" stroke="#6b7075" stroke-width="0.40" stroke-linejoin="round" textLength="119.0" lengthAdjust="spacing" >CHOCTAW</text>
<text x="731.0" y="644.5" font-size="19" fill="#fff" stroke="#fff" stroke-width="4.4" stroke-linejoin="round" textLength="90.0" lengthAdjust="spacing" >NATION</text>
<text x="731.0" y="644.5" font-size="19" fill="#6b7075" stroke="#6b7075" stroke-width="0.40" stroke-linejoin="round" textLength="90.0" lengthAdjust="spacing" >NATION</text>
<text x="534.0" y="651.0" font-size="19" fill="#fff" stroke="#fff" stroke-width="4.4" stroke-linejoin="round" textLength="143.0" lengthAdjust="spacing" >CHICKASAW</text>
<text x="534.0" y="651.0" font-size="19" fill="#6b7075" stroke="#6b7075" stroke-width="0.40" stroke-linejoin="round" textLength="143.0" lengthAdjust="spacing" >CHICKASAW</text>
<text x="562.0" y="674.0" font-size="19" fill="#fff" stroke="#fff" stroke-width="4.4" stroke-linejoin="round" textLength="90.0" lengthAdjust="spacing" >NATION</text>
<text x="562.0" y="674.0" font-size="19" fill="#6b7075" stroke="#6b7075" stroke-width="0.40" stroke-linejoin="round" textLength="90.0" lengthAdjust="spacing" >NATION</text>
<text x="1096.0" y="294.0" font-size="26" font-weight="normal" fill="#1d7d5a" stroke="#fff" stroke-width="4" paint-order="stroke" stroke-linejoin="round" textLength="144.0" lengthAdjust="spacingAndGlyphs" >Mark Twain</text>
<text x="1073.0" y="322.0" font-size="26" font-weight="normal" fill="#1d7d5a" stroke="#fff" stroke-width="4" paint-order="stroke" stroke-linejoin="round" textLength="189.0" lengthAdjust="spacingAndGlyphs" >National Forest</text>
<text x="1215.0" y="768.0" font-size="22" fill="#fff" stroke="#fff" stroke-width="4.4" stroke-linejoin="round" textLength="165.0" lengthAdjust="spacingAndGlyphs" >MISSISSIPPI</text>
<text x="1215.0" y="768.0" font-size="22" fill="#6b7075" stroke="#6b7075" stroke-width="0.40" stroke-linejoin="round" textLength="165.0" lengthAdjust="spacingAndGlyphs" >MISSISSIPPI</text>
<defs><filter id="sh" x="-10%" y="-10%" width="120%" height="130%"><feDropShadow dx="0" dy="1.5" stdDeviation="1.8" flood-color="#000" flood-opacity="0.3"/></filter></defs>
<g transform="translate(556,251.39999999999998)"><path d="M0 48 C-4 34 -11 28 -19 18 C-24 12 -26 6 -26 0 C-26 -14.4 -14.4 -26 0 -26 C14.4 -26 26 -14.4 26 0 C26 6 24 12 19 18 C11 28 4 34 0 48 Z" fill="#ea4335" stroke="#c5221f" stroke-width="2"/><circle cx="0" cy="0" r="9.7" fill="#b31412"/></g>
<rect x="20" y="20" width="444" height="90" rx="5" fill="#fff" filter="url(#sh)"/>
<text x="40.5" y="74.0" font-size="32" font-weight="normal" fill="#999" textLength="264.5" lengthAdjust="spacingAndGlyphs" >Search on the map</text>
<g transform="translate(403,50)" fill="none" stroke="#444" stroke-width="3.6" stroke-linecap="square"><circle cx="11" cy="11" r="8.6"/><path d="M17.5 17.5 L28 28"/></g>
<rect x="1320" y="20" width="80" height="80" rx="4" fill="#fff" filter="url(#sh)"/>
<path transform="translate(1344,44)" d="M0 10.5 V0 H10.5 M21.5 0 H32 V10.5 M32 21.5 V32 H21.5 M10.5 32 H0 V21.5" fill="none" stroke="#666" stroke-width="3.8"/>
<rect x="20" y="382" width="80" height="80" rx="2" fill="#fff" filter="url(#sh)"/>
<g transform="translate(60.700000000000045,402.4)">
 <path d="M-9 10 L9 10 Q11 10 12 13 L16.5 28 Q17 31 14 31 L11.5 31 L9.5 23 L9.5 49 L1.5 49 L1.2 36 L-1.2 36 L-1.5 49 L-9.5 49 L-9.5 23 L-11.5 31 L-14 31 Q-17 31 -16.5 28 L-12 13 Q-11 10 -9 10 Z" fill="#fdbd2c" stroke="#6b6b6b" stroke-width="1.3" stroke-linejoin="round"/>
 <path d="M-7.5 10.5 L7.5 10.5 L0 21 Z" fill="#e0812b"/>
 <circle cx="0" cy="0" r="10" fill="#fdbd2c" stroke="#6b6b6b" stroke-width="1.3"/>
</g>
<rect x="20" y="526" width="80" height="162" rx="2" fill="#fff" filter="url(#sh)"/>
<rect x="30" y="606" width="60" height="1.6" fill="#e6e6e6"/>
<path d="M43.5 566 H76.70000000000005 M60 549.5 V582.5" stroke="#666" stroke-width="5.8"/>
<path d="M43.5 647.5 H76.70000000000005" stroke="#666" stroke-width="5.8"/>
<rect x="514" y="660" width="394" height="81" rx="2" fill="#fff" filter="url(#sh)"/>
<rect x="695" y="660" width="2" height="81" fill="#ebebeb"/>
<text x="561.0" y="712.6" font-size="36" font-weight="bold" fill="#000" textLength="88.5" lengthAdjust="spacingAndGlyphs" >Mapa</text>
<text x="742.6" y="711.0" font-size="36" font-weight="normal" fill="#565656" textLength="119.4" lengthAdjust="spacingAndGlyphs" >Satélite</text>
<circle cx="1360" cy="671.5" r="40" fill="#fff" filter="url(#sh)"/>
<g transform="translate(1360,671.5)" fill="none" stroke="#666" stroke-width="4.6" stroke-linecap="butt" stroke-linejoin="miter"><path d="M-7.5 -14.5 L0 -22 L7.5 -14.5"/><path d="M-7.5 14.5 L0 22 L7.5 14.5"/><path d="M-14.5 -7.5 L-22 0 L-14.5 7.5"/><path d="M14.5 -7.5 L22 0 L14.5 7.5"/></g>
<rect x="542" y="732" width="878" height="28" rx="0" fill="#ffffff" fill-opacity="0.55"/>
<rect x="728" y="734" width="1.5" height="26" fill="#ddd"/>
<rect x="1129" y="734" width="1.5" height="26" fill="#ddd"/>
<rect x="1328" y="734" width="1.5" height="26" fill="#ddd"/>
<text x="551.5" y="751.5" font-size="20" font-weight="normal" fill="#222" textLength="165.5" lengthAdjust="spacingAndGlyphs" >Atalhos do teclado</text>
<text x="742.6" y="751.5" font-size="20" font-weight="normal" fill="#222" textLength="370.9" lengthAdjust="spacingAndGlyphs" >Dados cartográficos ©2026 Google, INEGI</text>
<text x="1140.0" y="753.0" font-size="20" font-weight="normal" fill="#222" textLength="65.0" lengthAdjust="spacingAndGlyphs" >100 km</text>
<path d="M1214 741 V750 H1312 V741" fill="none" stroke="#222" stroke-width="3.2"/>
<text x="1341.0" y="751.5" font-size="20" font-weight="normal" fill="#222" textLength="66.0" lengthAdjust="spacingAndGlyphs" >Termos</text>
<text x="21" y="743" font-size="38" font-weight="bold" stroke="#fff" stroke-width="3" paint-order="stroke" textLength="110" lengthAdjust="spacingAndGlyphs"><tspan fill="#4285f4">G</tspan><tspan fill="#ea4335">o</tspan><tspan fill="#fbbc05">o</tspan><tspan fill="#4285f4">g</tspan><tspan fill="#34a853">l</tspan><tspan fill="#ea4335">e</tspan></text>
</svg>
<!-- /map -->

<div class="fld" style="left:692px;top:1652px;width:702px"><span class="ph">Primary Telephone</span></div>
<div class="fld" style="left:1410px;top:1652px;width:702px"><span class="ph">Secondary Telephone</span></div>
<div class="fld" style="left:2128px;top:1652px;width:702px"><span class="ph">Text telephone</span></div>
<!-- bottom cover -->
<div class="abs" style="left:0;top:1699px;width:2880px;height:17px;background:#e1ebfc"></div>
</body></html>
